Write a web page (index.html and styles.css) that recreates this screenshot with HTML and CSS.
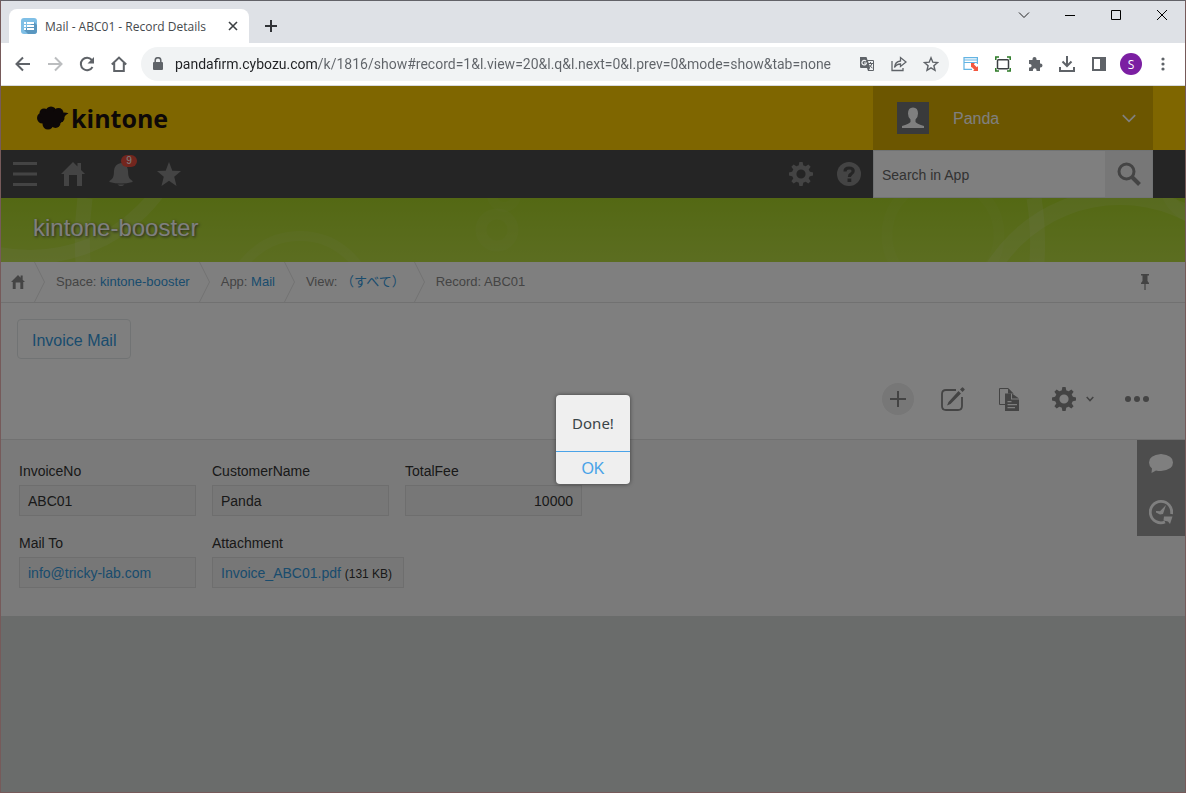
FILE: index.html
```html
<!DOCTYPE html>
<html lang="en">
<head>
<meta charset="utf-8">
<title>Mail - ABC01 - Record Details</title>
<link rel="stylesheet" href="styles.css">
</head>
<body>
<svg class="defs" aria-hidden="true">
  <symbol id="gear" viewBox="0 0 24 24">
    <circle cx="12" cy="12" r="6.8" fill="none" stroke="currentColor" stroke-width="4.4"/>
    <g fill="currentColor">
      <path id="tooth" d="M9.6 4 10.4 0h3.2l.8 4zM9.6 20l.8 4h3.2l.8-4z"/>
      <use href="#tooth" transform="rotate(45 12 12)"/>
      <use href="#tooth" transform="rotate(90 12 12)"/>
      <use href="#tooth" transform="rotate(135 12 12)"/>
    </g>
  </symbol>
  <symbol id="home" viewBox="0 0 24 24">
    <path fill="currentColor" d="M12 0 0 12h3v12h5V13h8v11h5V12h3l-4-4V1h-3.500v3.600z"/>
  </symbol>
  <symbol id="chevron" viewBox="0 0 12 8">
    <path fill="none" stroke="currentColor" stroke-width="1.500" d="m.5 1 5.500 5.500L11.500 1"/>
  </symbol>
  <symbol id="sep" viewBox="0 0 11 40">
    <path fill="none" stroke="currentColor" d="m.5 0 10 20-10 20"/>
  </symbol>
</svg>

<header class="browser">
  <div class="tabstrip">
    <div class="tab">
      <svg width="16" height="16" viewBox="0 0 16 16"><rect width="16" height="16" rx="3" fill="#7fbfe6"/><path fill="#5a97c0" d="m13 4 3 3v6q0 3-3 3H7l-4-4z"/><path fill="#fff" d="M3 4h2v2H3zm3 0h7v2H6zM3 7h2v2H3zm3 0h7v2H6zm-3 3h2v2H3zm3 0h7v2H6z"/></svg>
      <span class="tab-title">Mail - ABC01 - Record Details</span>
      <button class="bare" aria-label="Close tab"><svg width="16" height="16" viewBox="0 0 16 16"><path fill="none" stroke="#3c4043" stroke-width="1.600" d="m4 4 8 8m0-8-8 8"/></svg></button>
    </div>
    <button class="bare new-tab" aria-label="New tab"><svg width="16" height="16" viewBox="0 0 16 16"><path fill="none" stroke="#303236" stroke-width="2" d="M8 2v12M2 8h12"/></svg></button>
    <div class="window-buttons">
      <button class="bare" aria-label="Search tabs"><svg width="12" height="12" viewBox="0 0 12 12"><path fill="none" stroke="#222" d="m1 3.500 5 5 5-5"/></svg></button>
      <button class="bare" aria-label="Minimize"><svg width="12" height="12" viewBox="0 0 12 12"><path stroke="#000" d="M1 6.500h10"/></svg></button>
      <button class="bare" aria-label="Maximize"><svg width="12" height="12" viewBox="0 0 12 12"><path fill="none" stroke="#000" d="M1.500 1.500h9v9h-9z"/></svg></button>
      <button class="bare" aria-label="Close"><svg width="12" height="12" viewBox="0 0 12 12"><path stroke="#000" d="m1 1 10 10M11 1 1 11"/></svg></button>
    </div>
  </div>
  <div class="toolbar">
    <button class="bare" aria-label="Back"><svg width="16" height="16" viewBox="0 0 16 16"><path fill="none" stroke="#5f6368" stroke-width="2" d="M15 8H2m6-6.500L1.500 8 8 14.500"/></svg></button>
    <button class="bare" aria-label="Forward"><svg width="16" height="16" viewBox="0 0 16 16"><path fill="none" stroke="#bbbdbf" stroke-width="2" d="M1 8h13M8 1.500 14.500 8 8 14.500"/></svg></button>
    <button class="bare" aria-label="Reload"><svg width="16" height="16" viewBox="0 0 16 16"><path fill="none" stroke="#5f6368" stroke-width="2" d="M13.500 11A6.200 6.200 0 1 1 12.800 4L14 5.500"/><path fill="#5f6368" d="M15 1v6.500H8.500z"/></svg></button>
    <button class="bare" aria-label="Home page"><svg width="16" height="16" viewBox="0 0 16 16"><path fill="none" stroke="#5f6368" stroke-width="2" d="M.8 8.500 8 1.600l7.200 6.900M3.200 7v8h9.600V7"/></svg></button>
    <div class="address">
      <svg width="10" height="14" viewBox="0 0 10 14"><path fill="#5f6368" d="M1 5h8q1 0 1 1v6q0 1-1 1H1q-1 0-1-1V6q0-1 1-1z"/><path fill="none" stroke="#5f6368" stroke-width="1.500" d="M2.200 6V3.500a2.800 2.800 0 0 1 5.600 0V6"/></svg>
      <input type="text" class="url" aria-label="Address" value="pandafirm.cybozu.com/k/1816/show#record=1&amp;l.view=20&amp;l.q&amp;l.next=0&amp;l.prev=0&amp;mode=show&amp;tab=none">
      <button class="bare" aria-label="Translate"><svg width="16" height="16" viewBox="0 0 16 16"><path fill="#5f6368" d="M1 1h6.500l1 3H14q1 0 1 1v9q0 1-1 1H9l-1-3H2q-1 0-1-1z"/><path fill="#f1f3f4" d="M9 5h5v9h-4l1-2z"/><path fill="none" stroke="#f1f3f4" stroke-width="1.200" d="M7 5.200A2.300 2.300 0 1 0 7.500 7H5"/><path fill="none" stroke="#5f6368" d="M9 7.500h5M11.500 6v1.500m1.500 0q-1 3-3.500 4.500m1-3q1 2 3 3"/></svg></button>
      <button class="bare" aria-label="Share"><svg width="16" height="16" viewBox="0 0 16 16"><path fill="none" stroke="#5f6368" stroke-width="1.300" d="M1 5v9.500h11V12M9.500 5V1.500L15 6l-5.500 4.500V8Q5.500 8 3.500 11.500 4 5.500 9.500 5z"/></svg></button>
      <button class="bare" aria-label="Bookmark"><svg width="16" height="16" viewBox="0 0 16 16"><path fill="none" stroke="#5f6368" stroke-width="1.400" d="m8 1.800 1.800 4.400 4.700.4-3.600 3.100 1.100 4.600-4-2.500-4 2.500 1.100-4.600-3.600-3.100 4.700-.4z"/></svg></button>
    </div>
    <div class="extensions">
      <button class="bare" aria-label="Window resizer"><svg width="16" height="16" viewBox="0 0 16 16"><path fill="none" stroke="#63b4e3" stroke-width="1.200" d="M9 13.400H1V1.600h13.400V8M1 4h13.400M1 6.500h13.400"/><path fill="#f2573f" d="M8 7h4l-1.200 1.200 3 3L15 10v5h-5l1.400-1.300-3-3L8 12z"/></svg></button>
      <button class="bare" aria-label="Screen capture"><svg width="16" height="16" viewBox="0 0 16 16"><rect x="2.500" y="3.700" width="11" height="9" rx="1" fill="none" stroke="#3c4043" stroke-width="1.500"/><path fill="none" stroke="#2c7a26" stroke-width="1.500" d="M.8 4V1H4m8 0h3.200v3m0 8v3H12m-8 0H.8v-3"/></svg></button>
      <button class="bare" aria-label="Extensions"><svg width="16" height="16" viewBox="0 0 16 16"><path fill="#5f6368" d="M2 4h3.500V3a2 2 0 0 1 4 0v1H13v3.500h.5a2 2 0 0 1 0 4H13V15H9.500v-1a1.800 1.800 0 0 0-3.600 0v1H2v-3.500h.8a1.800 1.800 0 0 0 0-3.600H2z"/></svg></button>
      <button class="bare" aria-label="Downloads"><svg width="16" height="16" viewBox="0 0 16 16"><path fill="none" stroke="#5f6368" stroke-width="2" d="M8 0v10M3.500 5.500 8 10l4.500-4.500M1 11v4h14v-4"/></svg></button>
      <button class="bare" aria-label="Side panel"><svg width="16" height="16" viewBox="0 0 16 16"><path fill="#5f6368" fill-rule="evenodd" d="M1 1h14v14H1zm2 2v10h6V3z"/></svg></button>
      <button class="bare avatar" aria-label="Profile">S</button>
      <button class="bare" aria-label="Menu"><svg width="16" height="16" viewBox="0 0 16 16" fill="#5f6368"><circle cx="8" cy="3" r="1.600"/><circle cx="8" cy="8" r="1.600"/><circle cx="8" cy="13" r="1.600"/></svg></button>
    </div>
  </div>
</header>

<main class="page">
  <div class="brand">
    <a class="logo" href="#">
      <svg width="33" height="24" viewBox="0 0 33 24"><g fill="#1a1010"><circle cx="6.500" cy="12" r="5.500"/><circle cx="8" cy="7" r="4.500"/><circle cx="15" cy="6" r="5.500"/><circle cx="22.500" cy="7" r="5"/><circle cx="24" cy="12" r="4.500"/><circle cx="19.500" cy="17" r="5"/><circle cx="12" cy="18" r="5.500"/><path d="M7 6h18v11H7zM25 7q4-1 7.500.3Q29 9 27.500 12z"/></g></svg>
      <span>kintone</span>
    </a>
    <button class="user">
      <svg width="32" height="32" viewBox="0 0 32 32"><path fill="#727577" d="M0 0h32v32H0z"/><path fill="#fff" d="M16 5.500q5 0 5 6 0 4-2.500 6v2.500q1.500 2 8.500 4v2H5v-2q7-2 8.500-4v-2.500q-2.500-2-2.500-6 0-6 5-6z"/></svg>
      <span class="user-name">Panda</span>
      <svg width="14" height="9"><use href="#chevron"/></svg>
    </button>
  </div>

  <nav class="global">
    <button class="bare" aria-label="Menu"><svg width="24" height="24" viewBox="0 0 24 24"><path fill="currentColor" d="M0 0h24v3H0zm0 10.500h24v3H0zM0 21h24v3H0z"/></svg></button>
    <button class="bare" aria-label="Portal"><svg width="24" height="24"><use href="#home"/></svg></button>
    <button class="bare bell" aria-label="Notifications"><svg width="24" height="24" viewBox="0 0 24 24"><path fill="currentColor" d="M12 1q6.500 1 7 8 0 6 2 8l2.500 2v1q-11.500 3-23 0v-1L3 17q2-2 2-8 .5-7 7-8zM8.500 22.500h7q-3.500 3-7 0z"/></svg><span class="badge">9</span></button>
    <button class="bare" aria-label="Favorites"><svg width="24" height="24" viewBox="0 0 24 24"><path fill="currentColor" d="m12 0 3.300 8.700 8.700.4-6.800 5.600L19.500 24 12 18.800 4.500 24l2.300-9.300L0 9.100l8.700-.4z"/></svg></button>
    <span class="grow"></span>
    <button class="bare" aria-label="Settings"><svg width="24" height="24"><use href="#gear"/></svg></button>
    <button class="bare" aria-label="Help"><svg width="24" height="24" viewBox="0 0 24 24"><circle cx="12" cy="12" r="12" fill="currentColor"/><path fill="none" stroke="#4b4b4b" stroke-width="3.200" d="M8 9.500q0-3.500 4-3.500 4.200 0 4.200 3 0 1.800-2 3-1.800 1-1.800 3"/><path fill="#4b4b4b" d="M10.500 16.500h3.800V20h-3.800z"/></svg></button>
    <form class="search">
      <input type="text" aria-label="Search in App" placeholder="Search in App">
      <button type="button" aria-label="Search"><svg width="24" height="24" viewBox="0 0 24 24"><circle cx="9.500" cy="9.500" r="7.500" fill="none" stroke="currentColor" stroke-width="3"/><path stroke="currentColor" stroke-width="4" d="m15 15 7.500 7.500"/></svg></button>
    </form>
  </nav>

  <div class="space">
    <svg class="rings" width="400" height="64" viewBox="1 198 400 64" fill="none" stroke="#fff" stroke-opacity=".1">
      <path d="M85 198q-4 30-2 64" stroke-width="15"/>
      <circle cx="30" cy="98" r="159" stroke-width="14"/>
      <circle cx="300" cy="307" r="71" stroke-width="10" stroke-opacity=".06"/>
    </svg>
    <svg class="rings rings-right" width="720" height="64" viewBox="465 198 720 64" fill="none" stroke="#fff" stroke-opacity=".1">
      <circle cx="497" cy="230" r="16" stroke-width="11" stroke-opacity=".04"/>
      <circle cx="504" cy="195" r="12" stroke-width="10" stroke-opacity=".03"/>
      <circle cx="943" cy="235" r="56" stroke-width="11" stroke-opacity=".03"/>
      <circle cx="1120" cy="346" r="149" stroke-width="16"/>
      <path d="M1034 198q5 30 3 64" stroke-width="15"/>
      <circle cx="1205" cy="180" r="40" stroke-width="12" stroke-opacity=".05"/>
    </svg>
    <h1>kintone-booster</h1>
  </div>

  <nav class="crumbs">
    <a class="crumb-home" href="#" aria-label="Portal"><svg width="14" height="14"><use href="#home"/></svg></a>
    <svg width="11" height="40"><use href="#sep"/></svg>
    <span>Space: <a href="#">kintone-booster</a></span>
    <svg width="11" height="40"><use href="#sep"/></svg>
    <span>App: <a href="#">Mail</a></span>
    <svg width="11" height="40"><use href="#sep"/></svg>
    <span>View: <a href="#">（すべて）</a></span>
    <svg width="11" height="40"><use href="#sep"/></svg>
    <span>Record: ABC01</span>
    <button class="bare pin" aria-label="Pin"><svg width="8" height="16" viewBox="0 0 8 16"><path fill="currentColor" d="M0 0h8v1.500H6.500V7L8 9v1H4.600v6H3.400v-6H0V9l1.500-2V1.500H0z"/></svg></button>
  </nav>

  <div class="actions">
    <button class="invoice">Invoice Mail</button>
    <div class="record-tools">
      <button class="bare add" aria-label="Add record"><svg width="16" height="16" viewBox="0 0 16 16"><path stroke="currentColor" stroke-width="2" d="M8 0v16M0 8h16"/></svg></button>
      <button class="bare" aria-label="Edit record"><svg width="24" height="24" viewBox="0 0 24 24"><path fill="none" stroke="currentColor" stroke-width="1.800" d="M15 3H5Q1 3 1 7v12q0 4 4 4h12q4 0 4-4V10"/><path fill="currentColor" d="m17.500 4 2.500 2.500L9.500 17 6 18.500 7.500 15zM19 2.500l2-2q.5-.5 1 0l1.500 1.500q.5.500 0 1l-2 2z"/></svg></button>
      <button class="bare" aria-label="Duplicate record"><svg width="24" height="24" viewBox="0 0 24 24"><path fill="none" stroke="currentColor" d="M8 17.500H2.500v-16H11l5 5"/><path fill="currentColor" fill-rule="evenodd" d="M8 6.500h6v6h8V24H8zm7 0 7 5h-7zM10.500 14v1.200h4V14zm0 3v1.200H20V17zm0 3v1.200H18V20z"/><path fill="currentColor" d="m11 1 5 5.500h-5z"/></svg></button>
      <button class="bare options" aria-label="Options"><svg width="24" height="24"><use href="#gear"/></svg><svg width="8" height="6" viewBox="0 0 8 6"><path fill="none" stroke="currentColor" stroke-width="1.600" d="M.7 1 4 4.500 7.300 1"/></svg></button>
      <button class="bare" aria-label="More"><svg width="24" height="24" viewBox="0 0 24 24" fill="currentColor"><circle cx="3" cy="12" r="3"/><circle cx="12" cy="12" r="3"/><circle cx="21" cy="12" r="3"/></svg></button>
    </div>
  </div>

  <div class="record">
    <div class="fields">
      <div class="row">
        <div class="field"><div class="label">InvoiceNo</div><div class="value">ABC01</div></div>
        <div class="field"><div class="label">CustomerName</div><div class="value">Panda</div></div>
        <div class="field"><div class="label">TotalFee</div><div class="value number">10000</div></div>
      </div>
      <div class="row">
        <div class="field"><div class="label">Mail To</div><div class="value"><a href="#">info@tricky-lab.com</a></div></div>
        <div class="field"><div class="label">Attachment</div><div class="value file"><a href="#">Invoice_ABC01.pdf</a> <small>(131 KB)</small></div></div>
      </div>
    </div>
    <div class="side">
      <button class="bare" aria-label="Comments"><svg width="24" height="20" viewBox="0 0 24 20"><path fill="currentColor" d="M12 0q12 1 12 8.500T12 17q-3 0-5-.5L2.500 19 3 14.500Q0 12 0 8.500 0 1 12 0z"/></svg></button>
      <button class="bare" aria-label="History"><svg width="24" height="26" viewBox="0 0 24 26"><path fill="none" stroke="currentColor" stroke-width="2.800" d="M22.500 15A10.700 10.700 0 1 0 16 23"/><path fill="currentColor" d="M15 17.500h8.500L21 25l-2-2.500-4.500-1zM17 6l-3 9-3 .5-4-2V12l4 .3z"/></svg></button>
    </div>
  </div>

  <div class="overlay">
    <div class="dialog" role="alertdialog" aria-label="Done!">
      <p>Done!</p>
      <button>OK</button>
    </div>
  </div>
</main>
</body>
</html>
```
FILE: styles.css
```css
* { box-sizing: border-box; }

body {
  margin: 0;
  min-height: 100vh;
  display: flex;
  flex-direction: column;
  border: 1px solid #765a5a;
  border-top-color: #626268;
  font-family: "Liberation Sans", "Noto Sans CJK JP", sans-serif;
  color: #333;
}

svg { display: block; flex: none; }
a { color: #3498db; text-decoration: none; }
button, input { font: inherit; }

.defs { position: absolute; width: 0; height: 0; }
.grow { flex: 1; }

.bare {
  display: flex;
  align-items: center;
  justify-content: center;
  padding: 0;
  border: 0;
  background: none;
  color: inherit;
}

/* Browser chrome */
.browser {
  background: #fff;
  border-bottom: 1px solid #d8dadd;
  font-family: "Open Sans", sans-serif;
}

.tabstrip {
  display: flex;
  height: 42px;
  padding-left: 8px;
  background: #dee1e6;
}

.tab {
  display: flex;
  align-items: center;
  width: 240px;
  height: 34px;
  margin-top: 8px;
  padding: 0 8px 0 12px;
  border-radius: 8px 8px 0 0;
  background: #fff;
}

.tab-title {
  flex: 1;
  margin-left: 8px;
  font-size: 12px;
  white-space: nowrap;
  color: #45494d;
}

.new-tab { width: 44px; margin-top: 8px; }

.window-buttons {
  display: flex;
  height: 28px;
  margin-left: auto;
}

.window-buttons button { width: 46px; }

.toolbar {
  display: flex;
  align-items: center;
  height: 42px;
  padding: 0 6px 0 6px;
}

.toolbar > button { width: 32px; height: 32px; }

.address {
  display: flex;
  flex: 1;
  align-items: center;
  height: 34px;
  margin: 0 6px;
  padding: 0 10px 0 12px;
  border-radius: 17px;
  background: #f1f3f4;
}

.url {
  flex: 1;
  min-width: 0;
  margin-left: 12px;
  padding: 0;
  border: 0;
  outline: 0;
  font-family: Roboto, sans-serif;
  font-size: 14px;
  color: transparent;
  background: linear-gradient(to right, #202124 144px, #5f6368 144px);
  -webkit-background-clip: text;
  background-clip: text;
}

.address button { width: 16px; margin-left: 16px; }
.address button:first-of-type { margin-left: 8px; }

.extensions { display: flex; align-items: center; }
.extensions button { width: 32px; height: 32px; }

.extensions .avatar {
  width: 22px;
  height: 22px;
  margin: 0 5px;
  border-radius: 50%;
  background: #7b1fa2;
  color: #fff;
  font-size: 12px;
}

/* Page */
.page {
  position: relative;
  flex: 1;
  background: #d4d8d6;
}

.brand {
  display: flex;
  justify-content: space-between;
  height: 64px;
  padding: 0 32px 0 35px;
  background: #fc0;
}

.logo {
  display: flex;
  align-items: center;
  gap: 2px;
  color: #1a1010;
  font: bold 25px "Open Sans", sans-serif;
}

.user {
  display: flex;
  align-items: center;
  width: 280px;
  padding: 0 17px 0 24px;
  border: 0;
  background: #d9ad00;
  color: #fff;
  font-size: 16px;
}

.user-name {
  flex: 1;
  margin-left: 24px;
  padding-top: 2px;
  text-align: left;
}

.global {
  display: flex;
  height: 48px;
  padding-right: 32px;
  background: #4b4b4b;
  color: #898989;
}

.global > button { width: 48px; }
.bell { position: relative; }

.badge {
  position: absolute;
  top: 5px;
  right: 8px;
  width: 16px;
  border-radius: 6px;
  background: #e74c3c;
  color: #fff;
  font-size: 10px;
  line-height: 12px;
}

.search {
  display: flex;
  width: 280px;
  border: 1px solid #e3e7e8;
}

.search input {
  flex: 1;
  min-width: 0;
  padding: 2px 8px 0;
  border: 0;
  background: #fff;
  font-size: 14px;
}

.search input::placeholder { color: #666; opacity: 1; }

.search button {
  display: flex;
  align-items: center;
  justify-content: center;
  width: 47px;
  padding: 0;
  border: 0;
  background: #eee;
  color: #888;
}

.space {
  position: relative;
  display: flex;
  align-items: center;
  height: 64px;
  padding: 0 32px 4px;
  overflow: hidden;
  background: linear-gradient(#a8d128, #b8db42);
}

.rings { position: absolute; top: 0; left: 0; }
.rings-right { left: auto; right: 0; }

.space h1 {
  position: relative;
  margin: 0;
  font-size: 24px;
  font-weight: normal;
  color: #fff;
  text-shadow: 1px 1px 3px #444;
}

.crumbs {
  display: flex;
  align-items: center;
  height: 41px;
  border-bottom: 1px solid #e3e3e3;
  background: #fff;
  color: #888;
  font-size: 13px;
  line-height: 20px;
}

.crumbs > svg { color: #e3e3e3; }
.crumbs > span { padding: 0 9px 0 11px; white-space: nowrap; }
.crumb-home { padding: 0 9px 0 10px; color: #888; }
.pin { margin: 0 36px 0 auto; }

.actions {
  height: 137px;
  padding: 16px;
  border-bottom: 1px solid #e3e3e3;
  background: #fff;
  color: #888;
}

.invoice {
  display: block;
  height: 40px;
  padding: 4px 14px 0;
  border: 1px solid #e3e7e8;
  border-radius: 4px;
  background: #fff;
  color: #3498db;
  font-size: 16px;
}

.record-tools {
  display: flex;
  align-items: center;
  justify-content: flex-end;
  gap: 32px;
  height: 32px;
  margin: 24px 20px 0 0;
}

.add {
  width: 32px;
  height: 32px;
  margin-right: -5px;
  border-radius: 50%;
  background: #eee;
}

.options { gap: 10px; margin: 0 -1px; }

/* Record */
.record {
  display: flex;
  align-items: flex-start;
  justify-content: space-between;
  background: #f5f5f5;
}

.fields {
  display: flex;
  flex-direction: column;
  gap: 17px;
  padding: 21px 18px 28px;
}

.row { display: flex; gap: 16px; }

.label {
  margin-bottom: 4px;
  font-size: 14px;
  line-height: 20px;
}

.value {
  width: 177px;
  height: 31px;
  padding: 0 8px;
  border: 1px solid #dcdcdc;
  background: #eee;
  font-size: 14px;
  line-height: 31px;
  white-space: nowrap;
}

.number { text-align: right; }
.file { width: auto; padding-right: 11px; }
.value small { font-size: 12px; }

.side {
  width: 48px;
  background: #9b9b9b;
  color: #fff;
}

.side button { width: 48px; height: 48px; }

/* Dialog */
.overlay {
  position: absolute;
  inset: 0;
  display: flex;
  align-items: center;
  justify-content: center;
  background: rgba(0, 0, 0, .5);
}

.dialog {
  display: flex;
  flex-direction: column;
  border-radius: 4px;
  background: #efefef;
  box-shadow: 0 0 4px rgba(0, 0, 0, .5);
  overflow: hidden;
}

.dialog p {
  margin: 0;
  padding: 16px 16px;
  color: #3a4448;
  font: 15px/24px "Noto Sans", sans-serif;
}

.dialog button {
  height: 33px;
  padding: 2px 0 0;
  border: 0;
  border-top: 1px solid #4aa3e8;
  background: none;
  color: #4aa3e8;
  font-size: 16px;
}
```
